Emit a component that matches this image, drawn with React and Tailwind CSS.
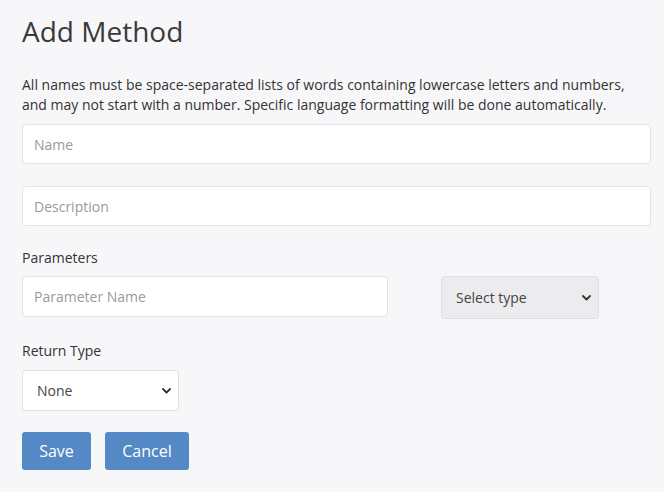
import { useState } from 'react';

function Chevron() {
  return (
    <svg className="pointer-events-none absolute right-[8px] top-1/2 -translate-y-1/2" width="9" height="6" viewBox="0 0 9 6" fill="none">
      <path d="M1 1l3.5 3.5L8 1" stroke="#333" strokeWidth="1.8" strokeLinecap="round" strokeLinejoin="round" />
    </svg>
  );
}

function Select({ value, options, className, onChange }) {
  return (
    <div className={`relative ${className}`}>
      <select
        value={value}
        onChange={(e) => onChange(e.target.value)}
        className="w-full h-full appearance-none rounded-[4px] border border-[#e1e1e4] pl-[14px] pr-6 text-[14px] text-[#444] outline-none"
      >
        {options.map((o) => (
          <option key={o} value={o}>{o}</option>
        ))}
      </select>
      <Chevron />
    </div>
  );
}

export default function App() {
  const [name, setName] = useState('');
  const [desc, setDesc] = useState('');
  const [param, setParam] = useState('');
  const [paramType, setParamType] = useState('Select type');
  const [returnType, setReturnType] = useState('None');

  const inputCls =
    'w-full h-[40px] rounded-[4px] border border-[#e3e3e6] bg-white px-[11px] text-[14px] text-[#333] placeholder:text-[#9a9a9a] outline-none';

  return (
    <div className="min-h-[492px] bg-[#f7f7f9] pl-[22px] pr-[13px] pt-[14px] text-[#333]" style={{ fontFamily: '"Open Sans", sans-serif' }}>
      <h1 className="text-[28px] leading-[34px] text-[#3a3a3a]">Add Method</h1>

      <p className="mt-[27px] text-[14px] leading-[20px]">
        All names must be space-separated lists of words containing lowercase letters and numbers,
        <br />
        and may not start with a number. Specific language formatting will be done automatically.
      </p>

      <input className={`${inputCls} mt-[9px]`} placeholder="Name" value={name} onChange={(e) => setName(e.target.value)} />
      <input className={`${inputCls} mt-[22px]`} placeholder="Description" value={desc} onChange={(e) => setDesc(e.target.value)} />

      <div className="mt-[22px] text-[14px] leading-[20px]">Parameters</div>
      <div className="mt-[8px] flex items-start">
        <input className={`${inputCls} !w-[366px] !h-[41px]`} placeholder="Parameter Name" value={param} onChange={(e) => setParam(e.target.value)} />
        <Select
          className="ml-[53px] w-[158px] h-[43px] [&_select]:bg-[#ececef] [&_select]:border-[#dedee1]"
          value={paramType}
          options={['Select type', 'int', 'string', 'bool']}
          onChange={setParamType}
        />
      </div>

      <div className="mt-[22px] text-[14px] leading-[20px]">Return Type</div>
      <Select
        className="mt-[9px] w-[157px] h-[41px] [&_select]:bg-white"
        value={returnType}
        options={['None', 'int', 'string', 'bool']}
        onChange={setReturnType}
      />

      <div className="mt-[21px] flex gap-[14px]">
        <button className="h-[38px] w-[69px] rounded-[3px] bg-[#5589c6] text-[16px] text-white">Save</button>
        <button className="h-[38px] w-[84px] rounded-[3px] bg-[#5589c6] text-[16px] text-white">Cancel</button>
      </div>
    </div>
  );
}
